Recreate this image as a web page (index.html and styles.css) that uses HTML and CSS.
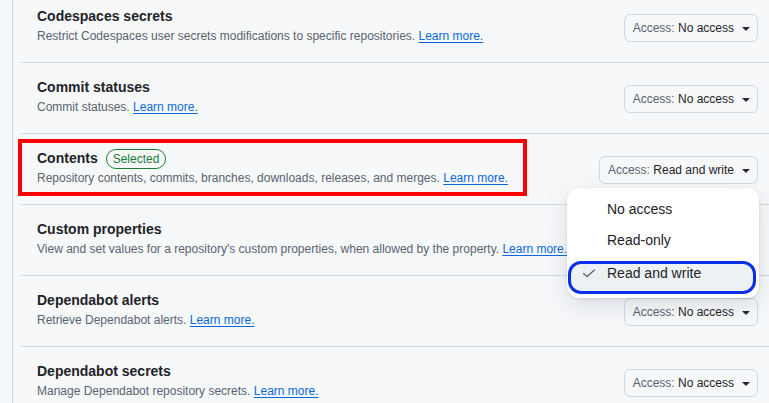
FILE: index.html
```html
<!DOCTYPE html>
<html lang="en">
<head>
<meta charset="utf-8">
<title>Repository permissions</title>
<link rel="stylesheet" href="styles.css">
</head>
<body>
<div class="perm-list">
  <div class="row">
    <div class="info">
      <div class="title">Codespaces secrets</div>
      <div class="desc">Restrict Codespaces user secrets modifications to specific repositories. <a href="#">Learn more.</a></div>
    </div>
    <button class="access-btn"><span class="muted">Access:</span>&nbsp;No access<svg class="caret" viewBox="0 0 16 16" width="16" height="16"><path d="M4.427 7.427l3.396 3.396a.25.25 0 00.354 0l3.396-3.396A.25.25 0 0011.396 7H4.604a.25.25 0 00-.177.427z"/></svg></button>
  </div>
  <div class="row">
    <div class="info">
      <div class="title">Commit statuses</div>
      <div class="desc">Commit statuses. <a href="#">Learn more.</a></div>
    </div>
    <button class="access-btn"><span class="muted">Access:</span>&nbsp;No access<svg class="caret" viewBox="0 0 16 16" width="16" height="16"><path d="M4.427 7.427l3.396 3.396a.25.25 0 00.354 0l3.396-3.396A.25.25 0 0011.396 7H4.604a.25.25 0 00-.177.427z"/></svg></button>
  </div>
  <div class="row row-open">
    <div class="highlight-box"></div>
    <div class="info">
      <div class="title">Contents <span class="badge">Selected</span></div>
      <div class="desc">Repository contents, commits, branches, downloads, releases, and merges. <a href="#">Learn more.</a></div>
    </div>
    <button class="access-btn access-wide"><span class="muted">Access:</span>&nbsp;Read and write<svg class="caret" viewBox="0 0 16 16" width="16" height="16"><path d="M4.427 7.427l3.396 3.396a.25.25 0 00.354 0l3.396-3.396A.25.25 0 0011.396 7H4.604a.25.25 0 00-.177.427z"/></svg></button>
    <div class="menu">
      <div class="menu-item">No access</div>
      <div class="menu-item">Read-only</div>
      <div class="menu-item menu-item-selected">
        <svg class="check" viewBox="0 0 16 16" width="16" height="16"><polyline points="2.5,8.6 6,11.6 13.5,5" fill="none" stroke="#59636e" stroke-width="1.3" stroke-linecap="round" stroke-linejoin="round"/></svg>
        <span>Read and write</span>
      </div>
    </div>
  </div>
  <div class="row">
    <div class="info">
      <div class="title">Custom properties</div>
      <div class="desc">View and set values for a repository's custom properties, when allowed by the property. <a href="#">Learn more.</a></div>
    </div>
  </div>
  <div class="row">
    <div class="info">
      <div class="title">Dependabot alerts</div>
      <div class="desc">Retrieve Dependabot alerts. <a href="#">Learn more.</a></div>
    </div>
    <button class="access-btn"><span class="muted">Access:</span>&nbsp;No access<svg class="caret" viewBox="0 0 16 16" width="16" height="16"><path d="M4.427 7.427l3.396 3.396a.25.25 0 00.354 0l3.396-3.396A.25.25 0 0011.396 7H4.604a.25.25 0 00-.177.427z"/></svg></button>
  </div>
  <div class="row">
    <div class="info">
      <div class="title">Dependabot secrets</div>
      <div class="desc">Manage Dependabot repository secrets. <a href="#">Learn more.</a></div>
    </div>
    <button class="access-btn"><span class="muted">Access:</span>&nbsp;No access<svg class="caret" viewBox="0 0 16 16" width="16" height="16"><path d="M4.427 7.427l3.396 3.396a.25.25 0 00.354 0l3.396-3.396A.25.25 0 0011.396 7H4.604a.25.25 0 00-.177.427z"/></svg></button>
  </div>
</div>
</body>
</html>
```

FILE: styles.css
```css
html, body {
  margin: 0;
  padding: 0;
  background: #f6f8fa;
  overflow: hidden;
}

body {
  font-family: "Liberation Sans", Arial, sans-serif;
  color: #1f2328;
  height: 403px;
}

.perm-list {
  margin-left: 12px;
  margin-top: -8px;
  border-left: 1px solid #d1d9e0;
  height: 420px;
}

.row {
  position: relative;
  display: flex;
  align-items: center;
  justify-content: space-between;
  margin-left: 8px;
  padding: 14px 11px 17px 16px;
  border-bottom: 1px solid #d1d9e0;
}

.info {
  display: flex;
  flex-direction: column;
  min-width: 0;
}

.title {
  display: flex;
  align-items: center;
  gap: 8px;
  font-size: 14px;
  line-height: 21px;
  font-weight: bold;
  color: #1f2328;
}

.desc {
  font-size: 12px;
  line-height: 18px;
  color: #59636e;
  white-space: nowrap;
}

.desc a {
  color: #0969da;
  text-decoration: underline;
  text-underline-offset: 2px;
}

.badge {
  display: inline-block;
  font-size: 12px;
  line-height: 18px;
  font-weight: normal;
  color: #1a7f37;
  border: 1px solid #1a7f37;
  border-radius: 10px;
  padding: 0 6px;
}

.access-btn {
  display: flex;
  align-items: center;
  flex-shrink: 0;
  height: 28px;
  margin-top: 5px;
  padding: 0 3px 0 8px;
  font-family: "Liberation Sans", Arial, sans-serif;
  font-size: 12px;
  color: #1f2328;
  background: #f6f8fa;
  border: 1px solid #d1d9e0;
  border-radius: 6px;
  white-space: nowrap;
}

.access-wide {
  padding: 0 3px 0 8px;
}

.muted {
  color: #59636e;
}

.caret {
  margin-left: 4px;
  fill: #25292e;
}

.highlight-box {
  position: absolute;
  left: -3px;
  top: 5px;
  width: 509px;
  height: 57px;
  box-sizing: border-box;
  border: 4px solid #ff0000;
  pointer-events: none;
}

.menu {
  position: absolute;
  top: 54px;
  right: 10px;
  z-index: 5;
  width: 192px;
  box-sizing: border-box;
  padding: 6px 3px 4px 1px;
  background: #ffffff;
  border-radius: 12px;
  box-shadow: 0 1px 3px rgba(31, 35, 40, 0.12), 0 8px 24px rgba(66, 74, 83, 0.14);
}

.menu-item {
  height: 31px;
  line-height: 31px;
  padding-left: 39px;
  font-size: 14px;
  color: #1f2328;
}

.menu-item-selected {
  display: flex;
  align-items: flex-start;
  gap: 10px;
  box-sizing: border-box;
  height: 33px;
  margin-top: 5px;
  padding: 1px 0 0 10px;
  line-height: 16px;
  background: #eef1f4;
  border: 3px solid #0b2fe8;
  border-radius: 13px;
}

.check {
  flex-shrink: 0;
}
```
